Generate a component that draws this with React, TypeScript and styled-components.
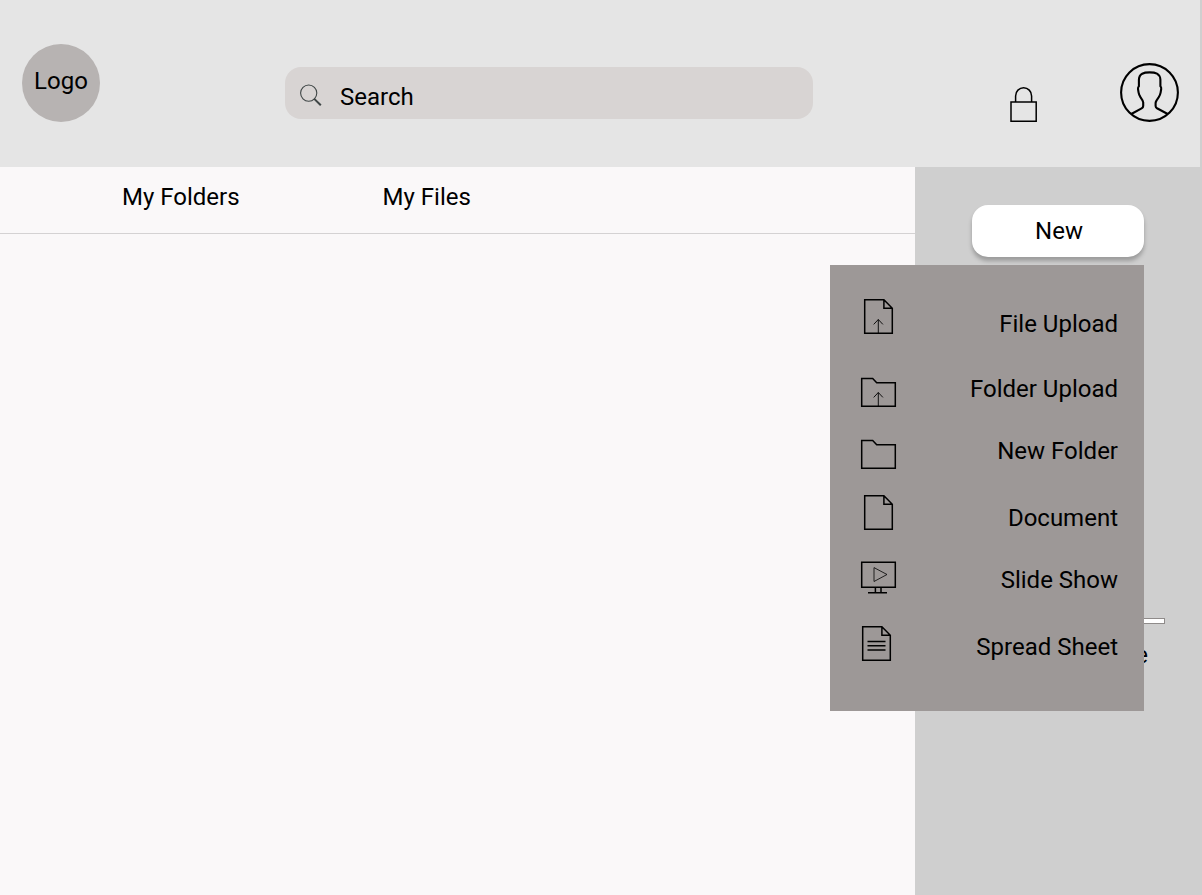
import React from "react";
import styled, { createGlobalStyle } from "styled-components";

const GlobalStyle = createGlobalStyle`
  *, *::before, *::after { box-sizing: border-box; }
  body {
    margin: 0;
    background: #cfcfcf;
    color: #000;
    font-family: Roboto, "Liberation Sans", sans-serif;
    font-size: 24px;
    line-height: 28px;
  }
  button, input { font: inherit; color: inherit; }
  button { border: 0; padding: 0; background: none; cursor: pointer; }
  a { color: inherit; text-decoration: none; }
  svg { display: block; }
`;

const Page = styled.div`
  display: flex;
  flex-direction: column;
  min-height: 100vh;
`;

const Header = styled.header`
  display: flex;
  align-items: flex-end;
  padding: 44px 21px 45px 22px;
  background: #e5e5e5;
  border-right: 2px solid #cfcfcf;
`;

const Logo = styled.a`
  display: flex;
  flex: none;
  align-items: center;
  justify-content: center;
  width: 78px;
  height: 78px;
  padding-bottom: 4px;
  border-radius: 50%;
  background: #b7b3b2;
`;

const SearchBox = styled.label`
  display: flex;
  flex: 0 1 528px;
  align-items: center;
  gap: 18px;
  min-width: 0;
  height: 52px;
  margin: 0 24px 3px 185px;
  padding: 0 15px;
  border-radius: 16px;
  background: #d8d4d3;

  svg { flex: none; }
`;

const SearchInput = styled.input`
  flex: 1;
  min-width: 0;
  height: 52px;
  padding: 8px 0 0;
  border: 0;
  outline: 0;
  background: transparent;

  &::placeholder { color: #000; opacity: 1; }
`;

const Actions = styled.div`
  display: flex;
  align-items: flex-end;
  gap: 82px;
  margin-left: auto;
`;

const Body = styled.div`
  display: flex;
  flex: 1;
`;

const Main = styled.main`
  flex: 1;
  background: #faf8f9;
`;

const Tabs = styled.nav`
  display: flex;
  gap: 143px;
  padding: 16px 24px 22px 122px;
  border-bottom: 1px solid #d4d2d3;
`;

const Sidebar = styled.aside`
  flex: none;
  width: 287px;
  padding: 38px 37px 0 57px;
  background: #cfcfcf;
`;

const NewArea = styled.div`
  position: relative;
  margin-right: 21px;
`;

const NewButton = styled.button`
  display: block;
  width: 100%;
  height: 52px;
  padding-left: 2px;
  border-radius: 16px;
  background: #fff;
  box-shadow: 0 4px 4px rgba(0, 0, 0, 0.25);
`;

const Menu = styled.ul`
  position: absolute;
  top: 60px;
  right: 0;
  width: 314px;
  margin: 0;
  padding: 33px 26px 38px 30px;
  list-style: none;
  background: #9d9897;
`;

const MenuRow = styled.li<{ $gap: number }>`
  margin-bottom: ${(p) => p.$gap}px;
`;

const MenuButton = styled.button`
  display: flex;
  align-items: center;
  justify-content: space-between;
  width: 100%;
  height: 52px;
`;

const Storage = styled.div`
  padding-top: 361px;
  text-align: right;
`;

const StorageBar = styled.progress`
  display: block;
  appearance: none;
  width: 100%;
  height: 6px;
  border: 1px solid #8f8b8a;
  background: #fff;

  &::-webkit-progress-bar { background: #fff; }
  &::-webkit-progress-value { background: #8f8b8a; }
`;

const StorageLabel = styled.label`
  display: block;
  padding: 17px 17px 0 0;
`;

const MenuIcon = ({ children }: { children: React.ReactNode }) => (
  <svg width="37" height="52" viewBox="0 0 37 52" fill="none" stroke="#000" strokeWidth="1.5" aria-hidden="true">
    {children}
  </svg>
);

const PAGE = "M4.7 1.7H23.9L32.3 10.3V35.3H4.7ZM23.9 1.7V10.3H32.3";
const FOLDER = "M1.7 15.4H12.7L16.7 19.7H35.3V43.2H1.7Z";

const items = [
  {
    label: "File Upload",
    gap: 13,
    icon: (
      <>
        <path d={PAGE} />
        <path strokeWidth="0.9" d="M18.3 35V21.5M13.7 26.4L18.3 21.5L22.9 26.4" />
      </>
    ),
  },
  {
    label: "Folder Upload",
    gap: 10,
    icon: (
      <>
        <path d={FOLDER} />
        <path strokeWidth="0.9" d="M18.3 43V29.5M13.7 34.4L18.3 29.5L22.9 34.4" />
      </>
    ),
  },
  { label: "New Folder", gap: 15, icon: <path d={FOLDER} /> },
  { label: "Document", gap: 10, icon: <path d={PAGE} transform="translate(0 2)" /> },
  {
    label: "Slide Show",
    gap: 15,
    icon: (
      <>
        <path d="M1.7 8.3H35.3V33.2H1.7ZM15.4 33.2V38.5M21 33.2V38.5M8 38.7H27" />
        <path strokeWidth="0.8" d="M14 13.6L27 20.5L14 27.5Z" />
      </>
    ),
  },
  {
    label: "Spread Sheet",
    gap: 0,
    icon: (
      <>
        <path d={PAGE} transform="translate(-2 4)" />
        <path d="M7.5 20.5H25.5M7.5 24.8H25.5M7.5 29H25.5" />
      </>
    ),
  },
];

export default function App() {
  return (
    <Page>
      <GlobalStyle />
      <Header>
        <Logo href="#">Logo</Logo>
        <SearchBox>
          <svg width="22" height="28" viewBox="0 0 22 28" fill="none" stroke="#3f4646" aria-hidden="true">
            <circle cx="8.7" cy="14.1" r="8.1" strokeWidth="1.1" />
            <path d="M14 19.6L20.8 26.3" strokeWidth="2" />
          </svg>
          <SearchInput type="text" placeholder="Search" aria-label="Search" />
        </SearchBox>
        <Actions>
          <button aria-label="Privacy">
            <svg width="28" height="36" viewBox="0 0 28 36" fill="none" stroke="#000" strokeWidth="1.5">
              <path d="M1 16H26.2V35.2H1Z" />
              <path d="M5.6 16V9.9A8 8.2 0 0 1 21.6 9.9V16" />
            </svg>
          </button>
          <button aria-label="Account">
            <svg width="59" height="59" viewBox="0 0 59 59" fill="none" stroke="#000" strokeWidth="2.1" strokeLinejoin="round">
              <circle cx="29.5" cy="29.5" r="28.4" />
              <path d="M11.3 51L21.6 45.4Q23.2 44.5 23.2 43V39.4Q23 37.8 20.6 34.4Q18.9 31.6 18.6 29.6L18 26Q17.9 24 18.9 23.2V16.8Q19 12.4 22.2 10.7Q24.6 9.4 29.6 9.4Q34.6 9.4 37 10.7Q40.2 12.4 40.4 16.8V23.2Q41.4 24 41.2 26L40.6 29.6Q40.3 31.6 38.6 34.4Q35.8 38.2 35.6 39.8V43Q35.6 44.5 37 45.3L47.7 51" />
            </svg>
          </button>
        </Actions>
      </Header>
      <Body>
        <Main>
          <Tabs>
            <a href="#folders">My Folders</a>
            <a href="#files">My Files</a>
          </Tabs>
        </Main>
        <Sidebar>
          <NewArea>
            <NewButton aria-expanded="true">New</NewButton>
            <Menu>
              {items.map((item) => (
                <MenuRow key={item.label} $gap={item.gap}>
                  <MenuButton>
                    <MenuIcon>{item.icon}</MenuIcon>
                    {item.label}
                  </MenuButton>
                </MenuRow>
              ))}
            </Menu>
          </NewArea>
          <Storage>
            <StorageBar id="storage" value={0} max={100} />
            <StorageLabel htmlFor="storage">Storage</StorageLabel>
          </Storage>
        </Sidebar>
      </Body>
    </Page>
  );
}
